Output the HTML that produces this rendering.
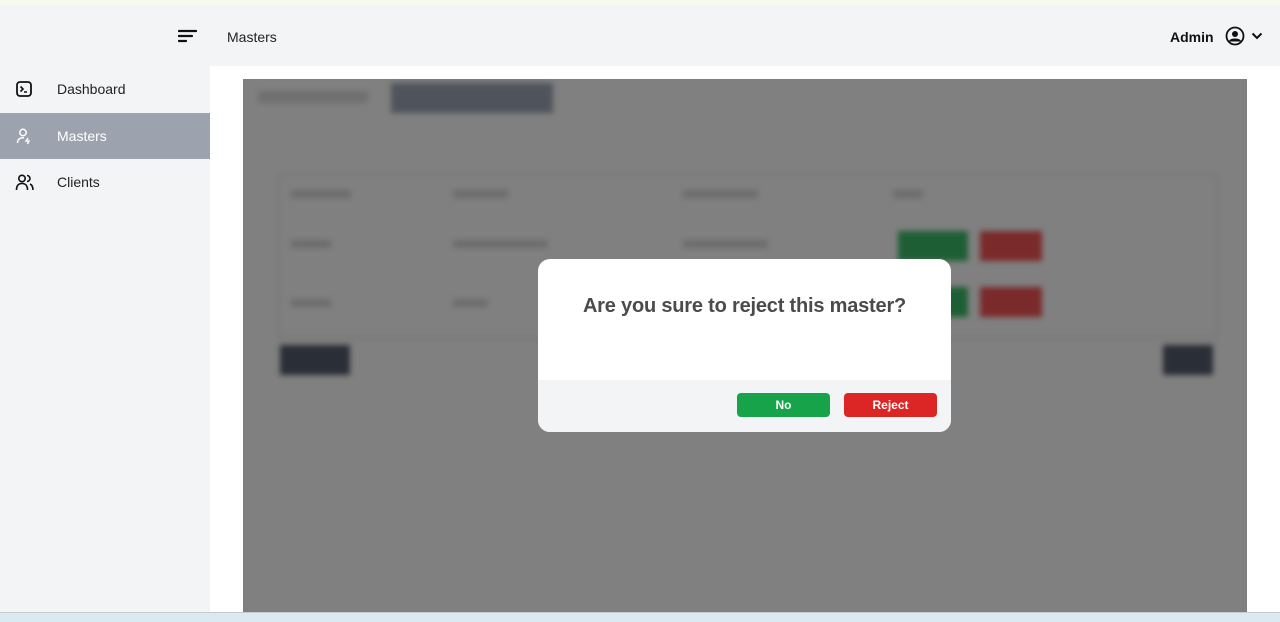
<!DOCTYPE html>
<html><head><meta charset="utf-8"><style>
*{box-sizing:border-box;margin:0;padding:0}
body{width:1280px;height:622px;overflow:hidden;background:#fff;font-family:"Liberation Sans",sans-serif;position:relative}
.abs{position:absolute}
.nav{position:absolute;left:0;width:210px;height:46px;display:flex;align-items:center;font-size:14px;color:#222}
.nav span{position:absolute;left:57px}
.nav svg{position:absolute;left:15px}
.blur{filter:blur(3px)}
.t{position:absolute;height:8px;background:#6c6c6c;filter:blur(3px)}
</style></head><body>
<div class="abs" style="left:0;top:0;width:1280px;height:6px;background:#f8f9ee"></div>
<div class="abs" style="left:0;top:6px;width:1280px;height:60px;background:#f3f4f6"></div>
<div class="abs" style="left:0;top:66px;width:210px;height:546px;background:#f3f4f6"></div>
<svg class="abs" style="left:178px;top:29px" width="19" height="15" viewBox="0 0 19 15"><path d="M1 2H18M1 7H14M1 12H8" stroke="#111" stroke-width="2.2" stroke-linecap="round"/></svg>
<div class="abs" style="left:227px;top:29px;font-size:14px;color:#222">Masters</div>
<div class="abs" style="left:1170px;top:29px;font-size:14px;font-weight:bold;color:#111">Admin</div>
<svg class="abs" style="left:1225px;top:26px" width="20" height="20" viewBox="0 0 20 20"><circle cx="10" cy="10" r="8.5" fill="none" stroke="#111" stroke-width="1.8"/><circle cx="10" cy="8" r="3" fill="#111"/><path d="M4.5 15.5C6 12.5 14 12.5 15.5 15.5" fill="#111" stroke="#111" stroke-width="1.5"/></svg>
<svg class="abs" style="left:1251px;top:32px" width="12" height="8" viewBox="0 0 12 8"><path d="M1.5 1.5L6 6L10.5 1.5" fill="none" stroke="#111" stroke-width="2"/></svg>

<div class="nav" style="top:66px"><svg width="18" height="18" viewBox="0 0 18 18"><rect x="2" y="2" width="14" height="14" rx="3" fill="none" stroke="#111" stroke-width="1.8"/><path d="M5.5 6.5L8 9L5.5 11.5M9 12H12" fill="none" stroke="#111" stroke-width="1.6"/></svg><span>Dashboard</span></div>
<div class="nav" style="top:113px;background:#9ca3af;color:#fff"><svg width="18" height="18" viewBox="0 0 18 18"><circle cx="8" cy="5.5" r="3.2" fill="none" stroke="#fff" stroke-width="1.5"/><path d="M2.5 16C2.5 11.5 6 10.5 9 10.8" fill="none" stroke="#fff" stroke-width="1.5"/><path d="M13 11L11 14H14L12.5 17" fill="none" stroke="#fff" stroke-width="1.4"/></svg><span>Masters</span></div>
<div class="nav" style="top:159px"><svg width="20" height="18" viewBox="0 0 20 18"><circle cx="7" cy="5.5" r="3.2" fill="none" stroke="#111" stroke-width="1.6"/><path d="M1.5 17C1.5 12 4 10.5 7 10.5S12.5 12 12.5 17" fill="none" stroke="#111" stroke-width="1.6"/><path d="M12 2.5A3 3 0 0 1 12 8.5M15 11C17 12 18 14 18 17" fill="none" stroke="#111" stroke-width="1.6"/></svg><span>Clients</span></div>

<div class="abs" style="left:243px;top:79px;width:1004px;height:533px;background:#808080;overflow:hidden">
 <div class="abs blur" style="left:15px;top:12px;width:110px;height:12px;background:#6f6f6f"></div>
 <div class="abs blur" style="left:148px;top:4px;width:162px;height:30px;background:#4f545c"></div>
 <div class="abs blur" style="left:35px;top:95px;width:940px;height:165px;border:2px solid #767676"></div>
 <div class="t" style="left:48px;top:111px;width:60px"></div>
 <div class="t" style="left:210px;top:111px;width:55px"></div>
 <div class="t" style="left:440px;top:111px;width:75px"></div>
 <div class="t" style="left:650px;top:111px;width:30px"></div>
 <div class="t" style="left:48px;top:161px;width:40px"></div>
 <div class="t" style="left:210px;top:161px;width:95px"></div>
 <div class="t" style="left:440px;top:161px;width:85px"></div>
 <div class="t" style="left:48px;top:220px;width:40px"></div>
 <div class="t" style="left:210px;top:220px;width:35px"></div>
 <div class="abs blur" style="left:655px;top:152px;width:70px;height:30px;background:#1e5e34"></div>
 <div class="abs blur" style="left:737px;top:152px;width:62px;height:30px;background:#7a2a2a"></div>
 <div class="abs blur" style="left:655px;top:208px;width:70px;height:30px;background:#1e5e34"></div>
 <div class="abs blur" style="left:737px;top:208px;width:62px;height:30px;background:#7a2a2a"></div>
 <div class="abs blur" style="left:37px;top:266px;width:70px;height:30px;background:#2a2e36"></div>
 <div class="abs blur" style="left:920px;top:266px;width:50px;height:30px;background:#2a2e36"></div>
</div>

<div class="abs" style="left:538px;top:259px;width:413px;height:173px;background:#fff;border-radius:12px;overflow:hidden">
 <div style="position:absolute;top:36px;width:100%;text-align:center;font-size:20px;font-weight:bold;color:#4b4b4b;letter-spacing:-0.2px">Are you sure to reject this master?</div>
 <div style="position:absolute;top:121px;left:0;width:100%;height:52px;background:#f3f4f6"></div>
 <div style="position:absolute;left:199px;top:134px;width:93px;height:24px;background:#16a34a;border-radius:4px;color:#fff;font-size:12px;font-weight:bold;text-align:center;line-height:24px">No</div>
 <div style="position:absolute;left:306px;top:134px;width:93px;height:24px;background:#dc2626;border-radius:4px;color:#fff;font-size:12px;font-weight:bold;text-align:center;line-height:24px">Reject</div>
</div>
<div class="abs" style="left:0;top:612px;width:1280px;height:10px;background:#dbe9f0;border-top:1px solid #c5ccd0"></div>
</body></html>
